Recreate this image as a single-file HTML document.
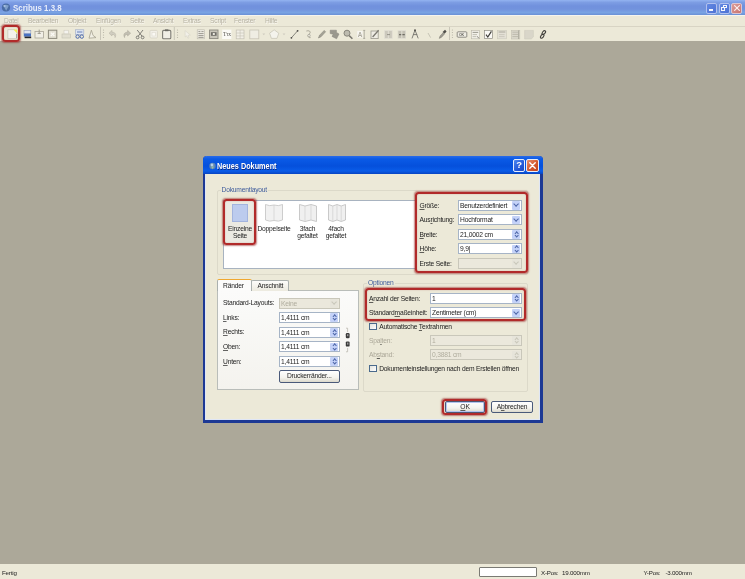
<!DOCTYPE html>
<html lang="de">
<head>
<meta charset="utf-8">
<title>Scribus 1.3.8</title>
<style>
*{box-sizing:border-box;margin:0;padding:0}
html,body{width:745px;height:579px;overflow:hidden;background:#aca899}
body{position:relative;filter:blur(.4px);font-family:"Liberation Sans",sans-serif;font-size:6.7px;letter-spacing:-.2px;color:#1c1c1c;line-height:1}
.abs{position:absolute}
.t{position:absolute;white-space:nowrap;line-height:8px;height:8px}
u{text-decoration:underline;text-decoration-thickness:0.6px;text-underline-offset:0.5px;text-decoration-color:rgba(20,20,20,.65)}
/* main window */
#mtitle{left:0;top:0;width:745px;height:15px;background:linear-gradient(#93b3f1 0,#7d9de3 2.5px,#7191dd 6px,#7292dd 9px,#79a3e3 12.5px,#6a90d6 15px)}
#mtitle .cap{left:13px;top:2.5px;font-size:9px;font-weight:bold;color:#e9eefa;line-height:10px;height:10px;letter-spacing:0;transform:scaleX(.875);transform-origin:0 50%}
#menubar{left:0;top:15px;width:745px;height:11px;background:#ece9d8;border-top:1px solid #f6f5ee}
#menubar .t{top:1px;color:#b7b3a4;text-shadow:.5px .5px 0 #f8f7f0}
#toolbar{left:0;top:26px;width:745px;height:15px;background:#ece9d8;border-top:1px solid #d8d4c4}
#status{left:0;top:564px;width:745px;height:15px;background:#ece9d8}
#status .t{top:4.5px;font-size:6.2px;color:#222}
/* dialog */
#dlg{left:203px;top:156px;width:339.5px;height:266.8px;background:#ece9d8;border:2.5px solid #1c3894;border-right-width:3px;border-bottom-width:3px;border-top:0;border-radius:4px 4px 0 0;box-shadow:inset 1px 0 0 #dfe6f6,inset -1px 0 0 #dfe6f6,inset 0 -1px 0 #dfe6f6}
#dtitle{left:-2px;top:0;width:339.5px;height:17.5px;background:linear-gradient(#2a6be8 0,#0a5ae6 3px,#0550dc 10px,#0a5ce8 15px,#0848c8 17.5px);border-radius:4px 4px 0 0}
#dtitle .cap{left:14px;top:5.2px;font-size:8.4px;letter-spacing:0;transform:scaleX(.87);transform-origin:0 50%;font-weight:bold;color:#fff;line-height:10px;height:10px;text-shadow:.5px .5px 0 #0a2a80}
.grp{position:absolute;border:1px solid #dcd9c9;border-radius:2px}
.glabel{position:absolute;background:#ece9d8;color:#3f5c9c;padding:0 1px;white-space:nowrap;line-height:8px;height:8px}
.inp{position:absolute;background:#fff;border:1px solid #a6b4c6;height:11px}
.inp.dis{background:#ebe8dc;border-color:#c9c7ba}
.inp .v{position:absolute;left:1px;top:1px;line-height:8px;white-space:nowrap}
.inp.dis .v{color:#b0ad9e}
.arr{position:absolute;right:.5px;top:.5px;width:8.5px;height:8.5px;background:#c4d2f8;border-radius:1px}
.dis .arr{background:#e6e4da}
.red{position:absolute;border:2px solid #b12a2a;border-radius:3.5px;box-shadow:0 0 1.5px .5px rgba(150,40,40,.55), inset 0 0 1.2px rgba(150,40,40,.5)}
.btn{position:absolute;border:1px solid #4a5a7a;border-radius:2px;background:linear-gradient(#fff,#f4f3ee 60%,#dcd9cc);text-align:center;line-height:10px;white-space:nowrap}
.chk{position:absolute;width:7.5px;height:7.5px;border:1px solid #4a6a8c;background:linear-gradient(135deg,#e2e2dc,#fff)}

.cb .arr::after{content:"";position:absolute;left:2.6px;top:1.4px;width:3.2px;height:3.2px;border-right:1.2px solid #4d66a8;border-bottom:1.2px solid #4d66a8;transform:rotate(45deg)}
.sp .arr::before{content:"";position:absolute;left:3px;top:1.8px;width:2.4px;height:2.4px;border-left:1.1px solid #4d66a8;border-top:1.1px solid #4d66a8;transform:rotate(45deg)}
.sp .arr::after{content:"";position:absolute;left:3px;top:4.2px;width:2.4px;height:2.4px;border-right:1.1px solid #4d66a8;border-bottom:1.1px solid #4d66a8;transform:rotate(45deg)}
.dis .arr::after,.dis .arr::before{border-color:#c9c7ba}
.tb{position:absolute;top:3.3px;width:12.4px;height:12.4px;border:1px solid #e8eefc;border-radius:2px}
</style>
</head>
<body>
<!-- main window chrome -->
<div id="mtitle" class="abs">
  <svg class="abs" style="left:1.2px;top:2.4px" width="10" height="11" viewBox="0 0 10 11"><circle cx="5" cy="5.5" r="4.1" fill="#4a6ca4"/><path d="M2.2 3.6 Q5 2 7.8 3.8 L5.2 8.8 Z" fill="#7f9fca"/><circle cx="3.6" cy="4" r="1.1" fill="#a9c0de"/></svg>
  <div class="t cap">Scribus 1.3.8</div>
  <div class="abs" style="left:706px;top:2.5px;width:11px;height:11px;border:1px solid #b2c1ee;border-radius:2px;background:linear-gradient(135deg,#6388e2,#4d72d4)"><span class="abs" style="left:2px;top:5.8px;width:3.6px;height:1.6px;background:#f4f6fc"></span></div>
  <div class="abs" style="left:718.6px;top:2.5px;width:11px;height:11px;border:1px solid #b2c1ee;border-radius:2px;background:linear-gradient(135deg,#6388e2,#4d72d4)"><span class="abs" style="left:3.4px;top:1.4px;width:4px;height:3.6px;border:.8px solid #f4f6fc;border-top-width:1.3px"></span><span class="abs" style="left:1.4px;top:3.4px;width:4px;height:3.8px;border:.8px solid #f4f6fc;border-top-width:1.3px;background:#5f82dc"></span></div>
  <div class="abs" style="left:731.4px;top:2.5px;width:11px;height:11px;border:1px solid #dcc6d2;border-radius:2px;background:linear-gradient(135deg,#dc9c98,#c87470)"><svg class="abs" style="left:1.5px;top:1.5px" width="6" height="6" viewBox="0 0 6 6"><path d="M.6 .6L5.4 5.4M5.4 .6L.6 5.4" stroke="#fbeeee" stroke-width="1.2" stroke-linecap="round"/></svg></div>
</div>
<div id="menubar" class="abs">
  <div class="t" style="left:4px">Datei</div>
  <div class="t" style="left:28px">Bearbeiten</div>
  <div class="t" style="left:68px">Objekt</div>
  <div class="t" style="left:96px">Einfügen</div>
  <div class="t" style="left:130px">Seite</div>
  <div class="t" style="left:153px">Ansicht</div>
  <div class="t" style="left:183px">Extras</div>
  <div class="t" style="left:210px">Script</div>
  <div class="t" style="left:234px">Fenster</div>
  <div class="t" style="left:265px">Hilfe</div>
</div>
<div id="toolbar" class="abs"><svg class="abs" style="left:0;top:-1px" width="745" height="15" viewBox="0 0 745 15">
<g id="seps" stroke="#c9c6b8" stroke-width="1">
<path d="M100.5 1V14M174.3 1V14M449.5 1V14"/>
</g>
<g fill="#b5b2a4">
<circle cx="103.5" cy="4" r=".6"/><circle cx="103.5" cy="6.5" r=".6"/><circle cx="103.5" cy="9" r=".6"/><circle cx="103.5" cy="11.5" r=".6"/>
<circle cx="177.5" cy="4" r=".6"/><circle cx="177.5" cy="6.5" r=".6"/><circle cx="177.5" cy="9" r=".6"/><circle cx="177.5" cy="11.5" r=".6"/>
<circle cx="452.4" cy="4" r=".6"/><circle cx="452.4" cy="6.5" r=".6"/><circle cx="452.4" cy="9" r=".6"/><circle cx="452.4" cy="11.5" r=".6"/>
</g>
<!-- new document -->
<path d="M7.8 3.6H14.6L17 6V12.6H7.8Z" fill="#f3f2ee" stroke="#c6c3b6" stroke-width=".7"/>
<path d="M13.4 3.4L17.2 3.4L17.2 7.6Z" fill="#f0ec50"/>
<path d="M16.6 8V12" stroke="#777" stroke-width=".6"/>
<!-- open (blue folder/drive) -->
<rect x="24" y="4.4" width="6.8" height="3.4" fill="#dfe4f0" stroke="#8f9bb8" stroke-width=".6"/>
<rect x="23.8" y="7.6" width="7.2" height="3" fill="#4a72c2"/>
<rect x="24.6" y="10.6" width="6.6" height="1.6" fill="#23262e"/>
<!-- save -->
<rect x="35" y="5.4" width="8.4" height="6.6" fill="#f1efe6" stroke="#a9a698" stroke-width=".8"/>
<path d="M37.6 7.4H40.8M39.2 3.6V8" stroke="#a09d90" stroke-width="1"/>
<!-- close -->
<rect x="48.4" y="4.2" width="8.4" height="8.2" fill="#e2dfd2" stroke="#8d8a7c" stroke-width="1"/>
<path d="M50.8 6.6L54.4 10M54.4 6.6L50.8 10" stroke="#fbfaf5" stroke-width="1.2"/>
<!-- print -->
<rect x="62" y="8" width="8.4" height="4" fill="#e1ded0" stroke="#c4c1b2" stroke-width=".6"/>
<rect x="64" y="4.2" width="4.4" height="3.6" fill="#f4f3ee" stroke="#cbc8ba" stroke-width=".5"/>
<!-- preflight -->
<rect x="75.6" y="3.8" width="8.2" height="4.6" fill="#dfe6f2" stroke="#9aa8c6" stroke-width=".6"/>
<path d="M77 6H82.4" stroke="#5a74b0" stroke-width=".9"/>
<circle cx="77.6" cy="10.6" r="1.7" fill="none" stroke="#3d5da8" stroke-width=".9"/><circle cx="81.8" cy="10.6" r="1.7" fill="none" stroke="#3d5da8" stroke-width=".9"/>
<!-- pdf -->
<path d="M89 12.2L91.4 4.2L93 9.4L96 11.6Z" fill="#f1efe4" stroke="#a6a291" stroke-width=".8"/>
<!-- undo / redo -->
<path d="M109 7.2L112 4.4V6.2C115.4 6.2 116.6 8.6 115 11.6C115.2 9.4 114.2 8.4 112 8.4V10Z" fill="#d0cdc0" stroke="#b4b1a3" stroke-width=".5"/>
<path d="M130.6 7.2L127.6 4.4V6.2C124.2 6.2 123 8.6 124.6 11.6C124.4 9.4 125.4 8.4 127.6 8.4V10Z" fill="#c2bfb2" stroke="#a6a395" stroke-width=".5"/>
<!-- scissors -->
<path d="M137.2 4L142.2 10.4M143 4L138 10.4" stroke="#75746d" stroke-width=".9"/>
<circle cx="137.6" cy="11.4" r="1.4" fill="none" stroke="#75746d" stroke-width=".9"/><circle cx="142.6" cy="11.4" r="1.4" fill="none" stroke="#75746d" stroke-width=".9"/>
<!-- copy -->
<rect x="150" y="4.4" width="7.4" height="7.6" rx="1" fill="#f2f0e8" stroke="#d3d0c2" stroke-width=".7"/>
<rect x="152" y="6.4" width="3.4" height="3.6" fill="#faf9f4" stroke="#d9d6ca" stroke-width=".5"/>
<!-- paste -->
<rect x="162.6" y="4.4" width="8.2" height="8.4" rx="1" fill="#f1efe6" stroke="#7d7c75" stroke-width="1.1"/>
<rect x="165" y="3.4" width="3.4" height="1.8" fill="#6a6962"/>
<!-- pointer -->
<path d="M185 4.6L190.4 9L188 9.4L189 11.8L187.8 12.2L186.8 9.8L185.2 11Z" fill="#f2f0e8" stroke="#d6d3c6" stroke-width=".6"/>
<!-- text frame -->
<rect x="197.2" y="3.8" width="7.4" height="9" fill="#efede4" stroke="#bbb8aa" stroke-width=".6"/>
<path d="M198.4 5.6H200.4M201.4 5.6H203.6M198.4 7.6H203.6M198.4 9.6H203.6M198.4 11.4H203.6" stroke="#85837a" stroke-width=".8"/>
<!-- image frame -->
<rect x="209.6" y="4" width="8.4" height="8.6" fill="#c9c6ba" stroke="#8a887e" stroke-width=".9"/>
<rect x="211" y="6.2" width="5.6" height="3.6" fill="#6f6e68"/>
<rect x="212.8" y="7" width="2" height="2" fill="#e8e6dc"/>
</svg>
<svg class="abs" style="left:0;top:-1px" width="745" height="15" viewBox="0 0 745 15">
<!-- render frame -->
<rect x="222.2" y="3.6" width="9.2" height="9.4" fill="#fbfaf6"/>
<text x="223" y="10.4" font-family="Liberation Serif, serif" font-size="5.6" fill="#55544e" letter-spacing="-.2">Tτx</text>
<!-- table -->
<rect x="236.2" y="4" width="7.8" height="8.8" fill="#f1efe6" stroke="#c3c0b2" stroke-width=".7"/>
<path d="M240.1 4V12.8M236.2 7H244M236.2 9.9H244" stroke="#c3c0b2" stroke-width=".6"/>
<!-- shape -->
<rect x="249.8" y="4" width="9" height="8.8" fill="#efede3" stroke="#c6c3b5" stroke-width=".8"/>
<path d="M262.4 7.6H265.2L263.8 9.2Z" fill="#cfccbf"/>
<!-- polygon -->
<path d="M274.2 3.8L278.8 7.2L277 12.4H271.4L269.6 7.2Z" fill="#f4f3ec" stroke="#c9c6b8" stroke-width=".8"/>
<path d="M282.6 7.6H285.4L284 9.2Z" fill="#cfccbf"/>
<!-- line -->
<path d="M291.4 11.8L297.6 4.8" stroke="#66655f" stroke-width=".75"/><circle cx="291.4" cy="11.8" r=".9" fill="#4a4944"/><circle cx="297.6" cy="4.8" r=".9" fill="#4a4944"/>
<!-- bezier -->
<path d="M306.4 5C310 4 311.4 6.4 309 8.2C307.4 9.6 308.2 12 310.6 11.6" fill="none" stroke="#aaa798" stroke-width="1"/>
<circle cx="309" cy="9.6" r="1.3" fill="#e9e7dc" stroke="#8d8b80" stroke-width=".5"/>
<!-- pencil -->
<path d="M318.4 12L319.6 9.2L324.2 4.4L325.6 5.8L321 10.8Z" fill="#a4a296" stroke="#7f7d73" stroke-width=".5"/>
<!-- rotate -->
<path d="M330.2 4.2H336.4V6.4L339 8L336.6 12.8L332 10.4L333.2 8.2L330.2 7.6Z" fill="#9a988e" stroke="#85837a" stroke-width=".5"/>
<!-- zoom -->
<circle cx="347" cy="7.2" r="3" fill="#bdbbaf" stroke="#88867c" stroke-width="1"/>
<path d="M349.2 9.6L352.4 12.8" stroke="#7b7970" stroke-width="1.5"/>
<!-- edit contents -->
<rect x="357.2" y="5" width="5.4" height="6.6" fill="#f7f6f1"/>
<text x="357.8" y="10.8" font-family="Liberation Sans, sans-serif" font-size="6.4" font-weight="bold" fill="#aeab9e">A</text>
<path d="M364.2 4.4V12.4M363.2 4.4H365.2M363.2 12.4H365.2" stroke="#8b897f" stroke-width=".6"/>
<!-- story editor -->
<rect x="371" y="5" width="7.2" height="7.6" fill="#efede4" stroke="#9b998e" stroke-width=".8"/>
<path d="M372.6 11L378.6 4.2" stroke="#7b7970" stroke-width="1.3"/>
<!-- link frames -->
<rect x="384.2" y="4.2" width="8.4" height="8.6" fill="#dedbd0"/>
<rect x="385" y="5" width="2.8" height="7" fill="#cbc8bc"/><rect x="389" y="5" width="2.8" height="7" fill="#cbc8bc"/>
<path d="M387 8.6H390" stroke="#8e8c82" stroke-width=".9"/>
<!-- unlink frames -->
<rect x="397.6" y="4.2" width="8.4" height="8.6" fill="#dedbd0"/>
<rect x="398.4" y="5" width="2.8" height="7" fill="#c3c0b4"/><rect x="402.4" y="5" width="2.8" height="7" fill="#c3c0b4"/>
<path d="M399 8.6H401.2M402.4 8.6H404.8" stroke="#6f6d65" stroke-width="1.1"/>
<!-- measure -->
<path d="M415 4L412 12.4M415 4L418.2 12.4M413 8.6H417.2" stroke="#75746d" stroke-width=".9" fill="none"/><circle cx="415" cy="4.2" r="1" fill="#55544e"/>
<!-- copy props -->
<path d="M428 7L430.6 11.6" stroke="#c2bfb1" stroke-width=".9"/>
<!-- eyedropper -->
<path d="M439.2 12.4L440 10L443 6.8L444.4 8.2L441.4 11.4Z" fill="#9d9b90" stroke="#6f6d65" stroke-width=".4"/>
<path d="M442.6 6L445 3.8L446.6 5.4L444.6 7.8Z" fill="#4f4e49"/>
<!-- pdf button -->
<rect x="457.2" y="5.8" width="9.6" height="5.4" rx=".8" fill="#efede4" stroke="#77756d" stroke-width=".8"/>
<text x="459" y="10" font-family="Liberation Sans, sans-serif" font-size="3.6" font-weight="bold" fill="#6a6962">OK</text>
<!-- pdf text field -->
<rect x="471.4" y="4.4" width="8" height="8.4" fill="#f2f0e8" stroke="#b9b6a8" stroke-width=".6"/>
<path d="M472.6 6.4H478.2" stroke="#85837a" stroke-width=".8"/><path d="M472.6 8.6H477M472.6 10.6H476" stroke="#aeab9e" stroke-width=".7"/>
<path d="M477 10.2L479 12.4" stroke="#6d6b63" stroke-width=".8"/>
<!-- pdf checkbox -->
<rect x="484.4" y="4.6" width="8" height="8" fill="#faf9f5" stroke="#8f8d83" stroke-width=".7"/>
<path d="M486 8.6L487.8 11L491.4 5.4" fill="none" stroke="#3e3d39" stroke-width="1.2"/>
<!-- pdf combo -->
<rect x="497.6" y="4.6" width="8.8" height="8.2" fill="#e4e1d6" stroke="#cbc8ba" stroke-width=".6"/>
<path d="M498.6 6H505.4" stroke="#b4b1a4" stroke-width="1.2"/><path d="M499 8.6H504.6M499 10.6H504.6" stroke="#c2bfb2" stroke-width=".7"/>
<!-- pdf list -->
<rect x="511.4" y="4.4" width="8.4" height="8.6" fill="#dbd8cc" stroke="#c3c0b2" stroke-width=".6"/>
<path d="M512.4 6.2H518M512.4 8.4H518M512.4 10.6H518" stroke="#bab7a9" stroke-width=".9"/><path d="M518.6 4.4V13" stroke="#a9a698" stroke-width=".9"/>
<!-- annotation -->
<path d="M524.6 4.4H533.4V11L531.2 13H524.6Z" fill="#d9d6c9" stroke="#cbc8ba" stroke-width=".5"/>
<!-- link annotation -->
<ellipse cx="543.8" cy="6.6" rx="2.3" ry="1.3" transform="rotate(-50 543.8 6.6)" fill="none" stroke="#403f3b" stroke-width="1.1"/>
<ellipse cx="542.2" cy="10.2" rx="2.3" ry="1.3" transform="rotate(-50 542.2 10.2)" fill="none" stroke="#403f3b" stroke-width="1.1"/>
</svg>
</div>
<div class="red" style="left:1.8px;top:24.6px;width:18.4px;height:17px;border-radius:3.5px"></div>
<div id="status" class="abs">
  <div class="t" style="left:2px">Fertig</div>
  <div class="abs" style="left:479px;top:2.5px;width:58px;height:10.5px;background:#fff;border:1px solid #7a7a74;border-radius:1px"></div>
  <div class="t" style="left:541px">X-Pos:</div>
  <div class="t" style="left:562px">19.000mm</div>
  <div class="t" style="left:643.5px">Y-Pos:</div>
  <div class="t" style="left:665.5px">-3.000mm</div>
</div>

<!-- dialog -->
<div id="dlg" class="abs">
  <div id="dtitle" class="abs">
    <svg class="abs" style="left:5.5px;top:5.5px" width="7" height="8" viewBox="0 0 7 8"><circle cx="3.5" cy="4" r="3.2" fill="#5d86b6"/><circle cx="3" cy="3" r="1.4" fill="#b8d0e6"/><path d="M2 4.5L5 4.5L3.5 7Z" fill="#9fc0a0"/></svg>
    <div class="t cap">Neues Dokument</div>
    <div class="tb" style="left:310px;background:linear-gradient(135deg,#4a86f0,#2458d8 60%,#1c48c0)"><span class="abs" style="left:0;top:0;width:10.4px;text-align:center;color:#fff;font-weight:bold;font-size:9.5px;line-height:10.4px;letter-spacing:0">?</span></div>
    <div class="tb" style="left:323.4px;background:linear-gradient(135deg,#e89070,#d4582c 55%,#c04420)"><svg class="abs" style="left:1.7px;top:1.7px" width="7" height="7" viewBox="0 0 7 7"><path d="M.8 .8L6.2 6.2M6.2 .8L.8 6.2" stroke="#fff" stroke-width="1.4" stroke-linecap="round"/></svg></div>
  </div>
</div>

<!-- dialog contents (page coordinates) -->
<div id="dc" class="abs" style="left:0;top:0;width:745px;height:579px">
  <!-- Dokumentlayout group -->
  <div class="grp" style="left:216.5px;top:190px;width:311px;height:84.5px"></div>
  <div class="glabel" style="left:220.5px;top:185.5px">Dokumentlayout</div>
  <div class="abs" style="left:223px;top:199.5px;width:193px;height:69px;background:#fff;border:1px solid #a8b3c0"></div>
  <!-- layout icons -->
  <div class="abs" style="left:224.5px;top:201px;width:30.5px;height:42.5px;background:#eceae2"></div>
  <div class="abs" style="left:232px;top:204px;width:16px;height:18px;background:#bccbee;border:1px solid #a3b4de"></div>
  <svg class="abs" style="left:264px;top:203px" width="20" height="20" viewBox="0 0 20 20"><path d="M1.5 1.5 Q5.5 3.5 10 2 Q14.5 3.5 18.5 1.5 V17 Q14.5 19 10 17.5 Q5.5 19 1.5 17 Z" fill="#f1f1f1" stroke="#c2c2c2" stroke-width=".8"/><path d="M10 2V17.5" stroke="#cfcfcf" stroke-width=".7"/></svg>
  <svg class="abs" style="left:298px;top:203px" width="20" height="20" viewBox="0 0 20 20"><path d="M1.5 1.5 L7 3 L13 1.5 L18.5 3 V18.5 L13 17 L7 18.5 L1.5 17 Z" fill="#f0f0f0" stroke="#bdbdbd" stroke-width=".8"/><path d="M7 3V18.5M13 1.5V17" stroke="#d0d0d0" stroke-width=".7"/></svg>
  <svg class="abs" style="left:326.5px;top:203px" width="20" height="20" viewBox="0 0 20 20"><path d="M1.5 1.5 L5.8 3 L10 1.5 L14.2 3 L18.5 1.5 V17 L14.2 18.5 L10 17 L5.8 18.5 L1.5 17 Z" fill="#f0f0f0" stroke="#bdbdbd" stroke-width=".8"/><path d="M5.8 3V18.5M10 1.5V17M14.2 3V18.5" stroke="#d0d0d0" stroke-width=".7"/></svg>
  <div class="t" style="left:220px;width:40px;text-align:center;top:224.5px">Einzelne</div>
  <div class="t" style="left:220px;width:40px;text-align:center;top:231.5px">Seite</div>
  <div class="t" style="left:254px;width:40px;text-align:center;top:224.5px">Doppelseite</div>
  <div class="t" style="left:287.5px;width:40px;text-align:center;top:224.5px">3fach</div>
  <div class="t" style="left:287.5px;width:40px;text-align:center;top:231.5px">gefaltet</div>
  <div class="t" style="left:316px;width:40px;text-align:center;top:224.5px">4fach</div>
  <div class="t" style="left:316px;width:40px;text-align:center;top:231.5px">gefaltet</div>
  <div class="red" style="left:222.8px;top:199.3px;width:33.5px;height:45.5px"></div>

  <!-- right form -->
  <div class="abs" style="left:416px;top:193px;width:110px;height:79px;background:#ece9d8"></div>
  <div class="t" style="left:419.5px;top:201.5px"><u>G</u>röße:</div>
  <div class="t" style="left:419.5px;top:216px">Aus<u>r</u>ichtung:</div>
  <div class="t" style="left:419.5px;top:230.5px"><u>B</u>reite:</div>
  <div class="t" style="left:419.5px;top:245px"><u>H</u>öhe:</div>
  <div class="t" style="left:419.5px;top:259.5px">Erste Seite:</div>
  <div class="cb inp" style="left:458px;top:199.5px;width:63.5px"><span class="v">Benutzerdefiniert</span><span class="arr"></span></div>
  <div class="cb inp" style="left:458px;top:214px;width:63.5px"><span class="v">Hochformat</span><span class="arr"></span></div>
  <div class="sp inp" style="left:458px;top:228.5px;width:63.5px"><span class="v">21,0002 cm</span><span class="arr"></span></div>
  <div class="sp inp" style="left:458px;top:243px;width:63.5px"><span class="v">9,9|</span><span class="arr"></span></div>
  <div class="cb inp dis" style="left:458px;top:257.5px;width:63.5px"><span class="arr"></span></div>
  <div class="red" style="left:414.5px;top:191.5px;width:113px;height:81.5px"></div>

  <!-- tabs -->
  <div class="abs" style="left:216.5px;top:290px;width:142px;height:100px;border:1px solid #b9bdb9;background:linear-gradient(#fbfbfa,#f4f3ee)"></div>
  <div class="abs" style="left:251px;top:280px;width:37.5px;height:10.5px;border:1px solid #aab0ae;border-bottom:0;border-radius:2px 2px 0 0;background:linear-gradient(#fdfdfb,#eceadf)"></div>
  <div class="abs" style="left:216.5px;top:278.5px;width:35px;height:12.5px;border:1px solid #aab0ae;border-bottom:0;border-top:1.5px solid #f0a830;border-radius:2px 2px 0 0;background:#fbfbfa"></div>
  <div class="t" style="left:223px;top:281.5px">Ränder</div>
  <div class="t" style="left:257.5px;top:282px">Anschnitt</div>
  <div class="t" style="left:223px;top:299px">Standard-Layouts:</div>
  <div class="t" style="left:223px;top:313.5px"><u>L</u>inks:</div>
  <div class="t" style="left:223px;top:328px"><u>R</u>echts:</div>
  <div class="t" style="left:223px;top:342.5px"><u>O</u>ben:</div>
  <div class="t" style="left:223px;top:357.5px"><u>U</u>nten:</div>
  <div class="cb inp dis" style="left:279px;top:297.5px;width:60.5px"><span class="v">Keine</span><span class="arr"></span></div>
  <div class="sp inp" style="left:279px;top:311.8px;width:60.5px"><span class="v">1,4111 cm</span><span class="arr"></span></div>
  <div class="sp inp" style="left:279px;top:326.5px;width:60.5px"><span class="v">1,4111 cm</span><span class="arr"></span></div>
  <div class="sp inp" style="left:279px;top:341px;width:60.5px"><span class="v">1,4111 cm</span><span class="arr"></span></div>
  <div class="sp inp" style="left:279px;top:355.6px;width:60.5px"><span class="v">1,4111 cm</span><span class="arr"></span></div>
  <svg class="abs" style="left:343.5px;top:326.5px" width="8" height="26" viewBox="0 0 8 26"><path d="M2 1.2H3.6V5" fill="none" stroke="#b4b2a8" stroke-width=".7"/><path d="M2 24.8H3.6V21" fill="none" stroke="#b4b2a8" stroke-width=".7"/><rect x="1.8" y="6" width="3.8" height="5.2" rx="1.2" fill="#3a3a3a"/><rect x="1.8" y="14.4" width="3.8" height="5.2" rx="1.2" fill="#3a3a3a"/><rect x="3" y="7.2" width="1.4" height="2" fill="#9a9a9a"/><rect x="3" y="15.6" width="1.4" height="2" fill="#9a9a9a"/></svg>
  <div class="btn" style="left:279px;top:370.3px;width:60.5px;height:12.3px">Druckerränder...</div>

  <!-- Optionen -->
  <div class="grp" style="left:363px;top:283px;width:164.5px;height:108.5px"></div>
  <div class="glabel" style="left:367px;top:278.5px">Optionen</div>
  <div class="t" style="left:369px;top:294.5px"><u>A</u>nzahl der Seiten:</div>
  <div class="t" style="left:369px;top:309px">Standard<u>m</u>aßeinheit:</div>
  <div class="sp inp" style="left:430px;top:292.8px;width:91.5px"><span class="v">1</span><span class="arr"></span></div>
  <div class="cb inp" style="left:430px;top:307.2px;width:91.5px"><span class="v">Zentimeter (cm)</span><span class="arr"></span></div>
  <div class="red" style="left:365px;top:288.3px;width:161px;height:33px"></div>
  <div class="chk" style="left:369.3px;top:322.8px"></div>
  <div class="t" style="left:379.2px;top:322.7px">Automatische <u>T</u>extrahmen</div>
  <div class="t" style="left:369px;top:336.7px;color:#aca899">Spa<u>l</u>ten:</div>
  <div class="t" style="left:369px;top:351px;color:#aca899">Ab<u>s</u>tand:</div>
  <div class="sp inp dis" style="left:430px;top:334.5px;width:91.5px"><span class="v">1</span><span class="arr"></span></div>
  <div class="sp inp dis" style="left:430px;top:349.3px;width:91.5px"><span class="v">0,3881 cm</span><span class="arr"></span></div>
  <div class="chk" style="left:369.3px;top:364.5px"></div>
  <div class="t" style="left:379.2px;top:364.7px">Dokumenteinstellungen nach dem Erstellen öffnen</div>

  <!-- buttons -->
  <div class="btn" style="left:445px;top:401.3px;width:40px;height:12px;box-shadow:inset 0 0 0 1px #b4c6f0"><u>O</u>K</div>
  <div class="btn" style="left:491px;top:401.3px;width:42px;height:12px">A<u>b</u>brechen</div>
  <div class="red" style="left:442.3px;top:398.8px;width:45.2px;height:16px"></div>
</div>
</body>
</html>
